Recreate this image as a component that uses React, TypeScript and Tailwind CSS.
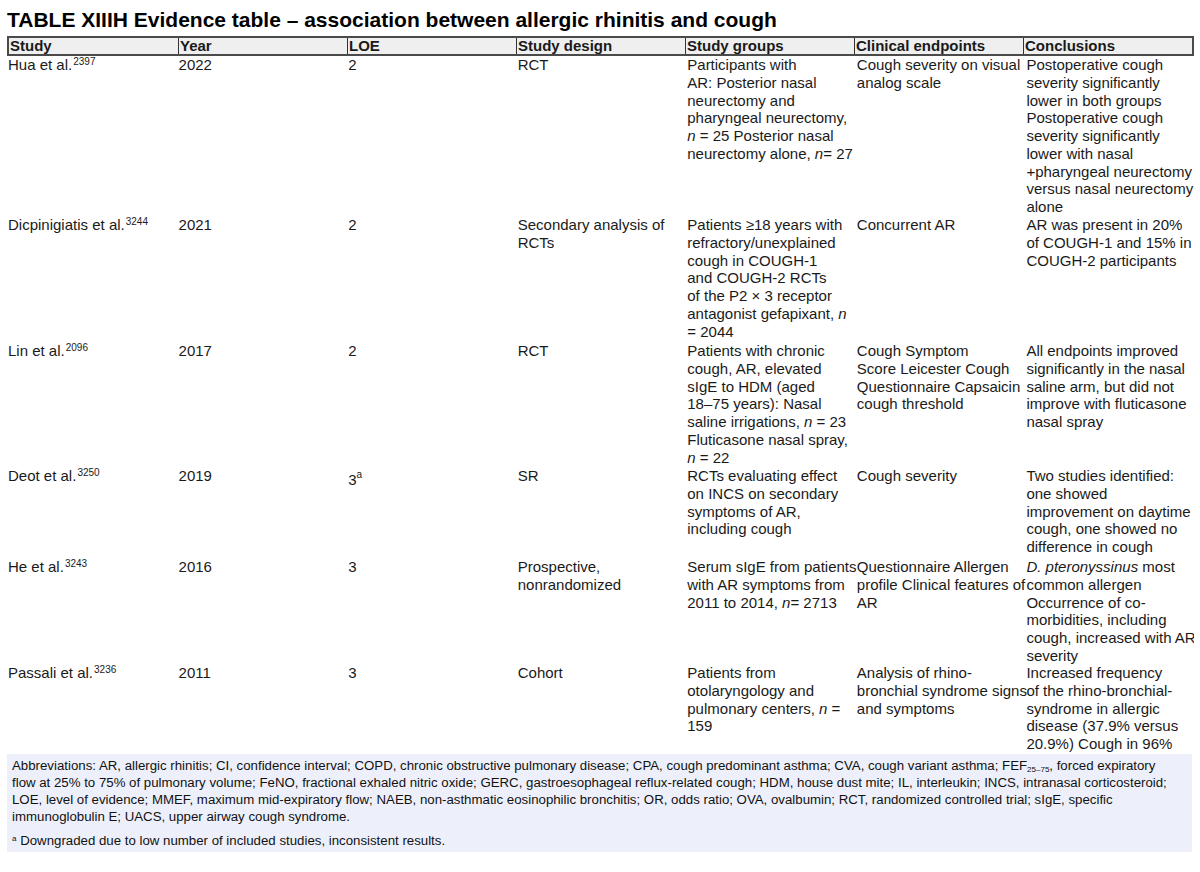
import React from "react";

type Line = React.ReactNode;
type Row = {
  study: string;
  ref: string;
  year: string;
  loe: React.ReactNode;
  design: Line[];
  groups: Line[];
  endpoints: Line[];
  conclusions: Line[];
  h: string;
};

const I = ({ children }: { children: React.ReactNode }) => <i>{children}</i>;

const rows: Row[] = [
  {
    study: "Hua et al.",
    ref: "2397",
    year: "2022",
    loe: "2",
    design: ["RCT"],
    groups: [
      "Participants with",
      "AR: Posterior nasal",
      "neurectomy and",
      "pharyngeal neurectomy,",
      <>
        <I>n</I> = 25 Posterior nasal
      </>,
      <>
        neurectomy alone, <I>n</I>= 27
      </>,
    ],
    endpoints: ["Cough severity on visual", "analog scale"],
    conclusions: [
      "Postoperative cough",
      "severity significantly",
      "lower in both groups",
      "Postoperative cough",
      "severity significantly",
      "lower with nasal",
      "+pharyngeal neurectomy",
      "versus nasal neurectomy",
      "alone",
    ],
    h: "h-[160px]",
  },
  {
    study: "Dicpinigiatis et al.",
    ref: "3244",
    year: "2021",
    loe: "2",
    design: ["Secondary analysis of", "RCTs"],
    groups: [
      "Patients ≥18 years with",
      "refractory/unexplained",
      "cough in COUGH-1",
      "and COUGH-2 RCTs",
      "of the P2 × 3 receptor",
      <>
        antagonist gefapixant, <I>n</I>
      </>,
      "= 2044",
    ],
    endpoints: ["Concurrent AR"],
    conclusions: ["AR was present in 20%", "of COUGH-1 and 15% in", "COUGH-2 participants"],
    h: "h-[126px]",
  },
  {
    study: "Lin et al.",
    ref: "2096",
    year: "2017",
    loe: "2",
    design: ["RCT"],
    groups: [
      "Patients with chronic",
      "cough, AR, elevated",
      "sIgE to HDM (aged",
      "18–75 years): Nasal",
      <>
        saline irrigations, <I>n</I> = 23
      </>,
      "Fluticasone nasal spray,",
      <>
        <I>n</I> = 22
      </>,
    ],
    endpoints: ["Cough Symptom", "Score Leicester Cough", "Questionnaire Capsaicin", "cough threshold"],
    conclusions: [
      "All endpoints improved",
      "significantly in the nasal",
      "saline arm, but did not",
      "improve with fluticasone",
      "nasal spray",
    ],
    h: "h-[125px]",
  },
  {
    study: "Deot et al.",
    ref: "3250",
    year: "2019",
    loe: (
      <span className="inline-block pt-[4px]">
        3<span className="text-[10px] leading-none align-top relative -top-[1px]">a</span>
      </span>
    ),
    design: ["SR"],
    groups: ["RCTs evaluating effect", "on INCS on secondary", "symptoms of AR,", "including cough"],
    endpoints: ["Cough severity"],
    conclusions: [
      "Two studies identified:",
      "one showed",
      "improvement on daytime",
      "cough, one showed no",
      "difference in cough",
    ],
    h: "h-[91px]",
  },
  {
    study: "He et al.",
    ref: "3243",
    year: "2016",
    loe: "3",
    design: ["Prospective,", "nonrandomized"],
    groups: [
      "Serum sIgE from patients",
      "with AR symptoms from",
      <>
        2011 to 2014, <I>n</I>= 2713
      </>,
    ],
    endpoints: ["Questionnaire Allergen", "profile Clinical features of", "AR"],
    conclusions: [
      <>
        <I>D. pteronyssinus</I> most
      </>,
      "common allergen",
      "Occurrence of co-",
      "morbidities, including",
      "cough, increased with AR",
      "severity",
    ],
    h: "h-[106px]",
  },
  {
    study: "Passali et al.",
    ref: "3236",
    year: "2011",
    loe: "3",
    design: ["Cohort"],
    groups: [
      "Patients from",
      "otolaryngology and",
      <>
        pulmonary centers, <I>n</I> =
      </>,
      "159",
    ],
    endpoints: ["Analysis of rhino-", "bronchial syndrome signs", "and symptoms"],
    conclusions: [
      "Increased frequency",
      "of the rhino-bronchial-",
      "syndrome in allergic",
      "disease (37.9% versus",
      "20.9%) Cough in 96%",
      "of patients with",
      "allergic disease",
    ],
    h: "h-[140px]",
  },
];

function Cell({ lines }: { lines: Line[] }) {
  return (
    <div className="pl-[2px] min-w-0">
      {lines.map((l, i) => (
        <div key={i} className="whitespace-nowrap">
          {l}
        </div>
      ))}
    </div>
  );
}

export default function App() {
  const headers = ["Study", "Year", "LOE", "Study design", "Study groups", "Clinical endpoints", "Conclusions"];
  return (
    <div
      className="w-[1200px] h-[872px] bg-white text-[#1a1a1a] overflow-hidden"
      style={{ fontFamily: '"Liberation Sans", Arial, sans-serif' }}
    >
      <div className="pl-[7px] pt-[7px] h-[36px] text-[21px] leading-[25px] font-bold text-black whitespace-nowrap">
        TABLE XIIIH Evidence table – association between allergic rhinitis and cough
      </div>
      <div className="ml-[7px] w-[1187px] h-[718px] overflow-hidden">
        <div className="grid grid-cols-7 h-[20px] border-2 border-[#4a4a4a] bg-[#efefef] text-[15px] leading-[16px] font-bold">
          {headers.map((h, i) => (
            <div key={h} className={`pl-[1px] ${i > 0 ? "border-l border-[#333]" : ""}`}>
              {h}
            </div>
          ))}
        </div>
        <div className="text-[15px] leading-[17.75px]">
          {rows.map((r) => (
            <div key={r.study} className={`grid grid-cols-7 ${r.h}`}>
              <div className="pl-[1px] whitespace-nowrap">
                {r.study}
                <span className="text-[10px] leading-none align-top relative top-[1px] ml-[1px]">{r.ref}</span>
              </div>
              <div className="pl-[2px]">{r.year}</div>
              <div className="pl-[2px]">{r.loe}</div>
              <Cell lines={r.design} />
              <Cell lines={r.groups} />
              <Cell lines={r.endpoints} />
              <Cell lines={r.conclusions} />
            </div>
          ))}
        </div>
      </div>
      <div className="ml-[7px] w-[1185px] h-[98px] bg-[#edf0fb] pl-[5px] pt-[3px] text-[13.25px] leading-[17px] text-[#111]">
        <div className="whitespace-nowrap h-[17px]">
          Abbreviations: AR, allergic rhinitis; CI, confidence interval; COPD, chronic obstructive pulmonary disease; CPA,
          cough predominant asthma; CVA, cough variant asthma; FEF
          <span className="text-[8px] leading-none relative top-[2px]">25–75</span>, forced expiratory
        </div>
        <div className="whitespace-nowrap h-[17px]">
          flow at 25% to 75% of pulmonary volume; FeNO, fractional exhaled nitric oxide; GERC, gastroesophageal
          reflux-related cough; HDM, house dust mite; IL, interleukin; INCS, intranasal corticosteroid;
        </div>
        <div className="whitespace-nowrap h-[17px]">
          LOE, level of evidence; MMEF, maximum mid-expiratory flow; NAEB, non-asthmatic eosinophilic bronchitis; OR, odds
          ratio; OVA, ovalbumin; RCT, randomized controlled trial; sIgE, specific
        </div>
        <div className="whitespace-nowrap h-[17px]">immunoglobulin E; UACS, upper airway cough syndrome.</div>
        <div className="whitespace-nowrap h-[17px] mt-[7px]">
          <span className="text-[8px] leading-none relative -top-[4px]">a</span> Downgraded due to low number of included
          studies, inconsistent results.
        </div>
      </div>
    </div>
  );
}
